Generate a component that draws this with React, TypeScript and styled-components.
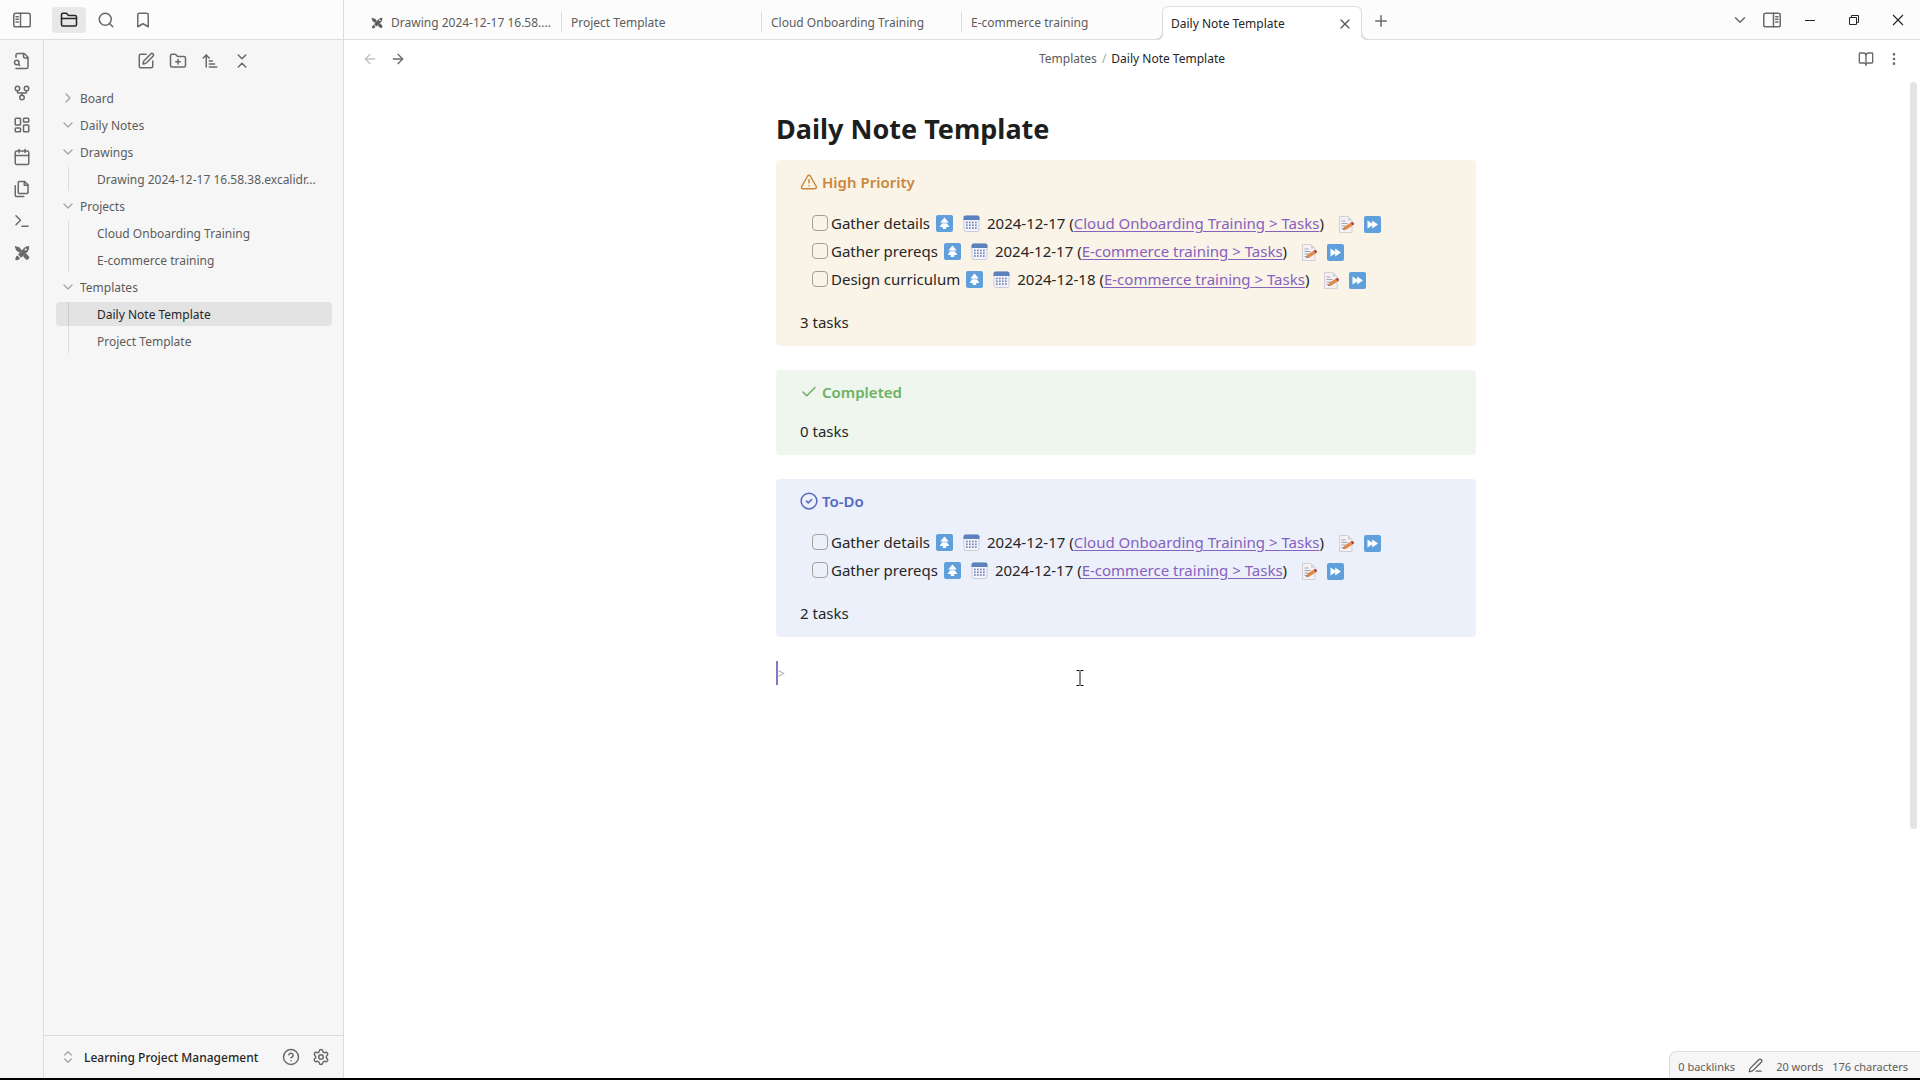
import React from "react";
import styled, { createGlobalStyle, css } from "styled-components";
import {
  ArrowLeft,
  ArrowRight,
  ArrowUpNarrowWide,
  BookOpen,
  Bookmark,
  Calendar,
  Check,
  ChevronDown,
  ChevronRight,
  ChevronsDownUp,
  ChevronsUpDown,
  CircleHelp,
  EllipsisVertical,
  FolderClosed,
  FolderPlus,
  GitFork,
  LayoutDashboard,
  PenLine,
  Plus,
  Search,
  Settings,
  SquarePen,
  Terminal,
  TriangleAlert,
  X,
} from "lucide-react";

const color = {
  line: "#dcdcdc",
  bar: "#fcfcfc",
  side: "#f6f6f6",
  text: "#262626",
  muted: "#5c5c5c",
  icon: "#6a6a6a",
  faint: "#a6a6a6",
  link: "#8661bd",
};

const GlobalStyle = createGlobalStyle`
  *, *::before, *::after { box-sizing: border-box; }
  body {
    margin: 0;
    background: #ffffff;
    color: ${color.text};
    font-family: "Noto Sans", "Open Sans", sans-serif;
    font-size: 12px;
  }
  button { font: inherit; color: inherit; border: 0; padding: 0; margin: 0; background: none; }
  h1, h2, p, ul { margin: 0; padding: 0; }
  ul { list-style: none; }
  svg { display: block; flex: none; }
`;

/* ---------- custom drawings ---------- */

const Stroke = styled.svg.attrs({ viewBox: "0 0 24 24", "aria-hidden": true })`
  width: 18px;
  height: 18px;
  fill: none;
  stroke: currentColor;
  stroke-width: 2;
  stroke-linecap: round;
  stroke-linejoin: round;
`;

const SidebarIcon = ({ right = false }: { right?: boolean }) => (
  <Stroke>
    <g transform={right ? "translate(24 0) scale(-1 1)" : undefined}>
      <rect x="1" y="3" width="22" height="18" rx="2.5" />
      <path d="M10 3v18" />
      <path d="M4 7.5h3M4 11h3M4 14.5h3" />
    </g>
  </Stroke>
);

const FileSearchIcon = () => (
  <Stroke>
    <path d="M4 22h14a2 2 0 0 0 2-2V7l-5-5H6a2 2 0 0 0-2 2v3" />
    <path d="M14 2v4a2 2 0 0 0 2 2h4" />
    <circle cx="5" cy="14" r="3" />
    <path d="m9 18-1.5-1.5" />
  </Stroke>
);

const FilesIcon = () => (
  <Stroke>
    <path d="M15.5 2H8.6c-.4 0-.8.2-1.1.5-.3.3-.5.7-.5 1.1v12.8c0 .4.2.8.5 1.1.3.3.7.5 1.1.5h9.8c.4 0 .8-.2 1.1-.5.3-.3.5-.7.5-1.1V6.5L15.5 2z" />
    <path d="M3 7.6v12.8c0 .4.2.8.5 1.1.3.3.7.5 1.1.5h9.8" />
    <path d="M15 2v5h5" />
  </Stroke>
);

const Solid = styled.svg.attrs({ "aria-hidden": true })<{ $size: number }>`
  width: ${(p) => p.$size}px;
  height: ${(p) => p.$size}px;
`;

const ExcalidrawIcon = ({ size }: { size: number }) => (
  <Solid $size={size} viewBox="0 0 24 24" fill="currentColor">
    <path d="M1 1.500 8 3.500l4 4.700-3.800 3.600L3 8z" />
    <path d="m14.600 14.800 3.200-2.600 4.400 4.600c1 1.200 1 2.400.2 3.600l-1.600 1.400c-1.200.6-2.200.4-3.200-.6l-4-4.200z" />
    <path
      fillRule="evenodd"
      d="M22.5 1.500c.5 3-.2 6-1.800 8.200L10.600 19l-4.400-4.600L15 4.600c2-2 4.600-3.100 7.500-3.100zM17.600 5.200a1.600 1.600 0 1 0 0 3.200 1.600 1.600 0 0 0 0-3.200z"
    />
    <path d="m5 15.600 4 4.200-2 2.200c-1.600 1-3.600.8-5.500.3 1-1 .8-2 1-3.400.2-1.400 1-2.400 2.500-3.300z" />
  </Solid>
);

const HighestIcon = () => (
  <Solid $size={17} viewBox="0 0 17 17">
    <rect width="17" height="17" rx="2" fill="#5f9fdc" />
    <path d="M8.500 2.500 12.800 7.500H10.400L13.400 12H10.200V14H6.800V12H3.600L6.600 7.500H4.200z" fill="#ffffff" />
    <path d="M5.500 8h6" stroke="#9cc4ea" />
  </Solid>
);

const DueIcon = () => (
  <Solid $size={17} viewBox="0 0 17 17">
    <rect x="1" y="1" width="15" height="15.500" rx="2" fill="#f4f4fa" stroke="#c9cbd8" />
    <path d="M.5 5V2.500a2 2 0 0 1 2-2h12a2 2 0 0 1 2 2V5z" fill="#5b82bd" />
    <g fill="#7486bd">
      {[6.6, 9.4, 12.2].map((y) =>
        [3, 6, 9, 12].map((x) => <rect key={`${x}-${y}`} x={x} y={y} width="1.7" height="1.7" />)
      )}
    </g>
  </Solid>
);

const MemoIcon = () => (
  <Solid $size={17} viewBox="0 0 17 17">
    <path d="M1.500.5h8.500l4 4v12h-12.500z" fill="#f3f1f4" stroke="#d3cfd4" />
    <path d="M10 .5v4h4z" fill="#d3cfd4" />
    <path d="M3.500 5h4M3.500 7.500h6M3.500 10h4M3.500 12.500h2" stroke="#a2a4b4" />
    <path d="m5.200 13.800 1-3 6.400-4 1.900 2.800-6.400 4.200z" fill="#e08a4a" />
    <path d="m12.600 6.800 1.300-.8c1.300-.4 2.700 1.500 1.800 2.700l-1.200.9z" fill="#b5413f" />
    <path d="m5.200 13.800.5-1.500 1.100 1.400z" fill="#4c4348" />
  </Solid>
);

const PostponeIcon = () => (
  <Solid $size={17} viewBox="0 0 17 17">
    <rect width="17" height="17" rx="2" fill="#5f9fdc" />
    <path d="M3.500 4.500 8.200 7.500V4.500L14 8.500 8.200 12.500V9.500L3.500 12.500z" fill="#ffffff" />
  </Solid>
);

const RoundCheckIcon = () => (
  <Stroke>
    <circle cx="12" cy="12" r="10.500" />
    <path d="m8.500 12 2.500 2.500 4.500-4.500" />
  </Stroke>
);

/* ---------- frame ---------- */

const Shell = styled.div`
  display: flex;
  flex-direction: column;
  height: 100vh;
  border-bottom: 2px solid #000000;
`;

const TopBar = styled.header`
  display: flex;
  flex: none;
  height: 40px;
  background: ${color.bar};
`;

const TopLeft = styled.div`
  display: flex;
  align-items: center;
  gap: 3px;
  flex: none;
  width: 344px;
  padding-left: 5px;
  border-right: 1px solid ${color.line};
  border-bottom: 1px solid ${color.line};
`;

const IconButton = styled.button<{ $active?: boolean; $w?: number; $dark?: boolean; $faint?: boolean }>`
  display: flex;
  align-items: center;
  justify-content: center;
  flex: none;
  width: ${(p) => p.$w ?? 34}px;
  height: 26px;
  border-radius: 4px;
  color: ${(p) => (p.$active || p.$dark ? color.text : p.$faint ? "#c4c4c4" : color.icon)};
  background: ${(p) => (p.$active ? "#e8e8e8" : "transparent")};
`;

const PanelToggle = styled.div`
  margin-right: 10px;
`;

const TabStrip = styled.div`
  display: flex;
  flex: 1;
  min-width: 0;
  padding: 6px 0 0 18px;
  border-bottom: 1px solid ${color.line};
`;

const Tab = styled.button<{ $active?: boolean; $divided?: boolean }>`
  position: relative;
  display: flex;
  align-items: center;
  gap: 8px;
  flex: 0 1 200px;
  min-width: 0;
  height: 33px;
  padding: 0 6px 0 9px;
  text-align: left;
  color: ${color.muted};
  ${(p) =>
    p.$divided &&
    css`
      &::after {
        content: "";
        position: absolute;
        right: 0;
        top: 6px;
        height: 20px;
        border-right: 1px solid ${color.line};
      }
    `}
  ${(p) =>
    p.$active &&
    css`
      height: 34px;
      padding: 0 8px;
      color: ${color.text};
      background: #ffffff;
      border: 1px solid ${color.line};
      border-bottom: 0;
      border-radius: 6px 6px 0 0;

      &::before,
      &::after {
        content: "";
        position: absolute;
        bottom: 0;
        width: 7px;
        height: 7px;
      }
      &::before {
        left: -7px;
        background: radial-gradient(circle at 0 0, ${color.bar} 5px, ${color.line} 6px, ${color.line} 7px, #ffffff 8px);
      }
      &::after {
        right: -7px;
        background: radial-gradient(circle at 100% 0, ${color.bar} 5px, ${color.line} 6px, ${color.line} 7px, #ffffff 8px);
      }
    `}
`;

const TabLabel = styled.span`
  flex: 1;
  overflow: hidden;
  white-space: nowrap;
  text-overflow: ellipsis;
`;

const NewTab = styled.div`
  padding: 2px 0 0 2px;
`;

const WindowControls = styled.div`
  display: flex;
  align-items: center;
  flex: none;
  border-bottom: 1px solid ${color.line};
`;

const Body = styled.div`
  display: flex;
  flex: 1;
  min-height: 0;
`;

const Ribbon = styled.nav`
  display: flex;
  flex-direction: column;
  align-items: center;
  gap: 6px;
  flex: none;
  width: 44px;
  padding-top: 8px;
  background: ${color.side};
  border-right: 1px solid ${color.line};
`;

/* ---------- file explorer ---------- */

const Sidebar = styled.aside`
  display: flex;
  flex-direction: column;
  flex: none;
  width: 300px;
  background: ${color.side};
  border-right: 1px solid ${color.line};
`;

const SideActions = styled.div`
  display: flex;
  justify-content: center;
  padding: 8px 0 12px;
`;

const Tree = styled.ul`
  flex: 1;
  min-height: 0;
  padding: 0 11px 0 12px;
`;

const Branch = styled.ul`
  display: flex;
  flex-direction: column;
  gap: 3px;
  margin: 0 0 3px;
  background: linear-gradient(${color.line}, ${color.line}) 12px 0 / 1px 100% no-repeat;
`;

const FolderRow = styled.button`
  display: flex;
  align-items: center;
  gap: 4px;
  width: 100%;
  height: 24px;
  padding-left: 4px;
  margin-bottom: 3px;
  color: ${color.muted};

  svg {
    color: ${color.faint};
  }
`;

const FileRow = styled.button<{ $active?: boolean }>`
  display: block;
  width: 100%;
  height: 24px;
  padding: 0 4px 0 41px;
  border-radius: 4px;
  text-align: left;
  overflow: hidden;
  white-space: nowrap;
  text-overflow: ellipsis;
  color: ${(p) => (p.$active ? color.text : color.muted)};
  background: ${(p) => (p.$active ? "rgba(0, 0, 0, 0.075)" : "transparent")};
`;

const VaultBar = styled.footer`
  display: flex;
  align-items: center;
  height: 43px;
  padding: 0 7px 0 16px;
  border-top: 1px solid ${color.line};
`;

const VaultName = styled.button`
  display: flex;
  align-items: center;
  gap: 8px;
  flex: 1;
  font-weight: 500;

  svg {
    color: ${color.faint};
  }
`;

/* ---------- note ---------- */

const Main = styled.main`
  position: relative;
  display: flex;
  flex-direction: column;
  flex: 1;
  min-width: 0;
`;

const ViewHeader = styled.div`
  display: grid;
  grid-template-columns: 1fr auto 1fr;
  align-items: center;
  height: 37px;
  padding: 0 12px;
`;

const HeaderSide = styled.div<{ $end?: boolean }>`
  display: flex;
  justify-content: ${(p) => (p.$end ? "flex-end" : "flex-start")};
`;

const Crumbs = styled.nav`
  display: flex;
  gap: 5px;
  color: ${color.muted};

  a {
    color: inherit;
    text-decoration: none;
  }
  i {
    font-style: normal;
    color: ${color.faint};
  }
  span {
    color: ${color.text};
  }
`;

const NotePane = styled.div`
  flex: 1;
  min-height: 0;
  padding: 31px 12px 0 0;
`;

const Note = styled.article`
  width: 100%;
  max-width: 700px;
  margin: 0 auto;
  font-size: 15px;
  line-height: 24px;
`;

const NoteTitle = styled.h1`
  margin-bottom: 10px;
  font-size: 27px;
  line-height: 42px;
  font-weight: 700;
  color: #1c1f1e;
`;

type Tone = "warning" | "success" | "todo";

const tones: Record<Tone, { bg: string; fg: string }> = {
  warning: { bg: "#faf3e8", fg: "#c9873c" },
  success: { bg: "#eef6ed", fg: "#6cb062" },
  todo: { bg: "#ebf0fb", fg: "#5468bd" },
};

const Callout = styled.section<{ $tone: Tone }>`
  margin-bottom: 24px;
  padding: 10px 24px 12px;
  border-radius: 4px;
  background: ${(p) => tones[p.$tone].bg};

  h2 {
    display: flex;
    align-items: center;
    gap: 4px;
    margin-bottom: 15px;
    font-size: 15px;
    font-weight: 600;
    color: ${(p) => tones[p.$tone].fg};
  }
`;

const TaskList = styled.ul`
  margin-bottom: 17px;
  padding-left: 12px;
`;

const TaskRow = styled.li`
  display: flex;
  align-items: center;
  height: 28px;
  white-space: nowrap;
`;

const TaskCheck = styled.input.attrs({ type: "checkbox" })`
  appearance: none;
  width: 16px;
  height: 16px;
  margin: 0 3px 0 0;
  border: 1px solid #a3a09e;
  border-radius: 4px;
`;

const TaskMeta = styled.span`
  display: flex;
  gap: 10px;
  padding: 0 7px 0 6px;
`;

const TaskActions = styled.span`
  display: flex;
  gap: 9px;
  padding: 2px 0 0 14px;
`;

const NoteLink = styled.a`
  color: ${color.link};
  text-decoration: underline;
  text-underline-offset: 2px;
`;

const EditLine = styled.p`
  display: flex;
  height: 24px;
  border-left: 2px solid #8577c8;
  font-size: 12px;
  line-height: 26px;
  color: ${color.faint};
`;

const Scrollbar = styled.div`
  position: absolute;
  top: 42px;
  right: 3px;
  width: 7px;
  height: 72%;
  border-radius: 4px;
  background: #e4e4e4;
`;

const Pointer = styled.svg`
  position: absolute;
  left: 732px;
  top: 630px;
  width: 8px;
  height: 16px;
`;

const StatusBar = styled.footer`
  position: absolute;
  right: 0;
  bottom: 0;
  display: flex;
  align-items: center;
  height: 27px;
  padding: 2px 12px 0 8px;
  border: 1px solid ${color.line};
  border-width: 1px 0 0 1px;
  border-radius: 8px 0 0 0;
  background: ${color.side};
  color: ${color.muted};
  font-size: 11px;

  svg {
    margin: 0 13px 2px;
  }
  span + span {
    margin-left: 9px;
  }
`;

/* ---------- data ---------- */

const details = { name: "Gather details", due: "2024-12-17", source: "Cloud Onboarding Training > Tasks" };
const prereqs = { name: "Gather prereqs", due: "2024-12-17", source: "E-commerce training > Tasks" };
const design = { name: "Design curriculum", due: "2024-12-18", source: "E-commerce training > Tasks" };

const callouts = [
  { tone: "warning" as Tone, title: "High Priority", icon: <TriangleAlert size={18} />, tasks: [details, prereqs, design] },
  { tone: "success" as Tone, title: "Completed", icon: <Check size={18} />, tasks: [] },
  { tone: "todo" as Tone, title: "To-Do", icon: <RoundCheckIcon />, tasks: [details, prereqs] },
];

const tree = [
  { name: "Board", open: false, files: [] },
  { name: "Daily Notes", open: true, files: [] },
  { name: "Drawings", open: true, files: ["Drawing 2024-12-17 16.58.38.excalidr..."] },
  { name: "Projects", open: true, files: ["Cloud Onboarding Training", "E-commerce training"] },
  { name: "Templates", open: true, files: ["Daily Note Template", "Project Template"] },
];

const ribbon = [
  { label: "Open quick switcher", icon: <FileSearchIcon /> },
  { label: "Open graph view", icon: <GitFork size={18} /> },
  { label: "Create new canvas", icon: <LayoutDashboard size={18} /> },
  { label: "Open daily note", icon: <Calendar size={18} /> },
  { label: "Insert template", icon: <FilesIcon /> },
  { label: "Open command palette", icon: <Terminal size={18} /> },
  { label: "New drawing", icon: <ExcalidrawIcon size={16} /> },
];

export default function App() {
  return (
    <Shell>
      <GlobalStyle />
      <TopBar>
        <TopLeft>
          <PanelToggle>
            <IconButton aria-label="Toggle left sidebar">
              <SidebarIcon />
            </IconButton>
          </PanelToggle>
          <IconButton $active aria-label="Files">
            <FolderClosed size={18} />
          </IconButton>
          <IconButton aria-label="Search">
            <Search size={18} />
          </IconButton>
          <IconButton aria-label="Bookmarks">
            <Bookmark size={18} />
          </IconButton>
        </TopLeft>
        <TabStrip>
          <Tab $divided>
            <ExcalidrawIcon size={12} />
            <TabLabel>Drawing 2024-12-17 16.58....</TabLabel>
          </Tab>
          <Tab $divided>
            <TabLabel>Project Template</TabLabel>
          </Tab>
          <Tab $divided>
            <TabLabel>Cloud Onboarding Training</TabLabel>
          </Tab>
          <Tab>
            <TabLabel>E-commerce training</TabLabel>
          </Tab>
          <Tab $active>
            <TabLabel>Daily Note Template</TabLabel>
            <X size={16} color={color.muted} />
          </Tab>
          <NewTab>
            <IconButton aria-label="New tab">
              <Plus size={18} />
            </IconButton>
          </NewTab>
        </TabStrip>
        <WindowControls>
          <IconButton $w={32} aria-label="Tab list">
            <ChevronDown size={18} />
          </IconButton>
          <IconButton $w={32} aria-label="Toggle right sidebar">
            <SidebarIcon right />
          </IconButton>
          <IconButton $w={44} $dark aria-label="Minimize">
            <Solid $size={12} viewBox="0 0 12 12">
              <path d="M1 6.500h10" stroke="currentColor" />
            </Solid>
          </IconButton>
          <IconButton $w={44} $dark aria-label="Restore">
            <Solid $size={12} viewBox="0 0 12 12" fill="none" stroke="currentColor">
              <path d="M1.500 3.500h7v7h-7zM3.500 3.500v-2h7v7h-2" />
            </Solid>
          </IconButton>
          <IconButton $w={44} $dark aria-label="Close window">
            <Solid $size={12} viewBox="0 0 12 12">
              <path d="m1 1 10 10M11 1 1 11" stroke="currentColor" strokeWidth={1.2} />
            </Solid>
          </IconButton>
        </WindowControls>
      </TopBar>
      <Body>
        <Ribbon>
          {ribbon.map((item) => (
            <IconButton key={item.label} aria-label={item.label}>
              {item.icon}
            </IconButton>
          ))}
        </Ribbon>
        <Sidebar>
          <SideActions>
            <IconButton $w={32} aria-label="New note">
              <SquarePen size={18} />
            </IconButton>
            <IconButton $w={32} aria-label="New folder">
              <FolderPlus size={18} />
            </IconButton>
            <IconButton $w={32} aria-label="Change sort order">
              <ArrowUpNarrowWide size={18} />
            </IconButton>
            <IconButton $w={32} aria-label="Collapse all">
              <ChevronsDownUp size={18} />
            </IconButton>
          </SideActions>
          <Tree>
            {tree.map((folder) => (
              <li key={folder.name}>
                <FolderRow>
                  {folder.open ? <ChevronDown size={16} /> : <ChevronRight size={16} />}
                  {folder.name}
                </FolderRow>
                {folder.files.length > 0 && (
                  <Branch>
                    {folder.files.map((file) => (
                      <li key={file}>
                        <FileRow $active={file === "Daily Note Template"}>{file}</FileRow>
                      </li>
                    ))}
                  </Branch>
                )}
              </li>
            ))}
          </Tree>
          <VaultBar>
            <VaultName>
              <ChevronsUpDown size={16} />
              Learning Project Management
            </VaultName>
            <IconButton $w={30} aria-label="Help">
              <CircleHelp size={18} />
            </IconButton>
            <IconButton $w={30} aria-label="Settings">
              <Settings size={18} />
            </IconButton>
          </VaultBar>
        </Sidebar>
        <Main>
          <ViewHeader>
            <HeaderSide>
              <IconButton $w={28} $faint aria-label="Back">
                <ArrowLeft size={16} />
              </IconButton>
              <IconButton $w={28} aria-label="Forward">
                <ArrowRight size={16} />
              </IconButton>
            </HeaderSide>
            <Crumbs aria-label="Breadcrumb">
              <a href="#templates">Templates</a>
              <i>/</i>
              <span>Daily Note Template</span>
            </Crumbs>
            <HeaderSide $end>
              <IconButton $w={28} aria-label="Reading view">
                <BookOpen size={16} />
              </IconButton>
              <IconButton $w={28} aria-label="More options">
                <EllipsisVertical size={16} />
              </IconButton>
            </HeaderSide>
          </ViewHeader>
          <NotePane>
            <Note>
              <NoteTitle>Daily Note Template</NoteTitle>
              {callouts.map((box) => (
                <Callout key={box.title} $tone={box.tone}>
                  <h2>
                    {box.icon}
                    {box.title}
                  </h2>
                  {box.tasks.length > 0 && (
                    <TaskList>
                      {box.tasks.map((task) => {
                        const id = `${box.tone}-${task.name}`.replace(/\s/g, "-");
                        return (
                          <TaskRow key={id}>
                            <TaskCheck id={id} />
                            <label htmlFor={id}>{task.name}</label>
                            <TaskMeta>
                              <HighestIcon />
                              <DueIcon />
                            </TaskMeta>
                            <span>
                              {task.due} (<NoteLink href="#tasks">{task.source}</NoteLink>)
                            </span>
                            <TaskActions>
                              <button aria-label="Edit task">
                                <MemoIcon />
                              </button>
                              <button aria-label="Postpone task">
                                <PostponeIcon />
                              </button>
                            </TaskActions>
                          </TaskRow>
                        );
                      })}
                    </TaskList>
                  )}
                  <p>{box.tasks.length} tasks</p>
                </Callout>
              ))}
              <EditLine>&gt;</EditLine>
            </Note>
          </NotePane>
          <Scrollbar />
          <Pointer viewBox="0 0 8 16" aria-hidden="true">
            <path d="M.5.5h3M4.500.5h3M4 1v14M.5 15.500h3M4.500 15.500h3" stroke="#111111" fill="none" />
          </Pointer>
          <StatusBar>
            <span>0 backlinks</span>
            <PenLine size={15} />
            <span>20 words</span>
            <span>176 characters</span>
          </StatusBar>
        </Main>
      </Body>
    </Shell>
  );
}
